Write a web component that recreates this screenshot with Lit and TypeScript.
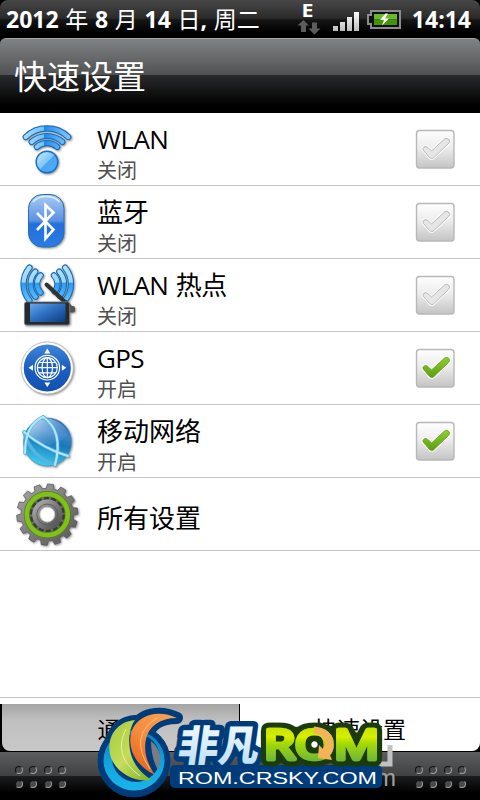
import {css, CSSResultGroup, html, LitElement, svg, SVGTemplateResult, TemplateResult} from "lit";
import {property, customElement} from "lit/decorators.js";
import {classMap} from "lit/directives/class-map.js";

interface Setting {
    icon: string;
    title: string;
    state?: string;
    checked?: boolean;
}

const SETTINGS: Setting[] = [
    {icon: "wlan", title: "WLAN", state: "关闭", checked: false},
    {icon: "bluetooth", title: "蓝牙", state: "关闭", checked: false},
    {icon: "hotspot", title: "WLAN 热点", state: "关闭", checked: false},
    {icon: "gps", title: "GPS", state: "开启", checked: true},
    {icon: "mobile", title: "移动网络", state: "开启", checked: true},
    {icon: "gear", title: "所有设置"},
];

// Arc around (cx, cy), angles in degrees
function arc(cx: number, cy: number, r: number, from: number, to: number): string {
    const rad = Math.PI / 180;
    const x1 = cx + r * Math.cos(from * rad);
    const y1 = cy + r * Math.sin(from * rad);
    const x2 = cx + r * Math.cos(to * rad);
    const y2 = cy + r * Math.sin(to * rad);
    return `M${x1.toFixed(2)} ${y1.toFixed(2)}A${r} ${r} 0 0 1 ${x2.toFixed(2)} ${y2.toFixed(2)}`;
}

function gearPath(cx: number, cy: number, outer: number, inner: number, teeth: number): string {
    const points: string[] = [];
    const step = (Math.PI * 2) / teeth;
    for (let i = 0; i < teeth; i++) {
        const a = i * step - 0.12;
        for (const [offset, r] of [[-0.33, inner], [-0.22, outer], [0.22, outer], [0.33, inner]]) {
            const t = a + offset * step;
            points.push(`${(cx + r * Math.cos(t)).toFixed(2)} ${(cy + r * Math.sin(t)).toFixed(2)}`);
        }
    }
    return `M${points.join("L")}Z`;
}

const wave = (d: string): SVGTemplateResult => svg`
    <path d=${d} fill="none" stroke="#1467b8" stroke-width="6.2" stroke-linecap="round"/>
    <path d=${d} fill="none" stroke="url(#wave)" stroke-width="4.2" stroke-linecap="round"/>`;

const ICONS: Record<string, SVGTemplateResult> = {
    wlan: svg`
        <defs>
            <linearGradient id="wave" gradientUnits="userSpaceOnUse" x1="6" y1="0" x2="58" y2="0">
                <stop offset="0" stop-color="#b5e2ff"/><stop offset=".44" stop-color="#6dc0fa"/>
                <stop offset=".45" stop-color="#1c8bec"/><stop offset="1" stop-color="#8fd2fb"/>
            </linearGradient>
            <linearGradient id="dot" x1="0" y1="0" x2="1" y2="1">
                <stop offset="0" stop-color="#d9f1ff"/><stop offset=".5" stop-color="#7cc3fb"/>
                <stop offset=".52" stop-color="#4aa4f6"/><stop offset="1" stop-color="#49b2fb"/>
            </linearGradient>
        </defs>
        ${wave(arc(32, 42, 30.6, 226, 314))}
        ${wave(arc(32, 42, 23, 228, 312))}
        ${wave(arc(32, 42, 15.8, 230, 310))}
        <circle cx="32" cy="45" r="10.800" fill="url(#dot)" stroke="#1b6dc0" stroke-width="1.4"/>`,
    bluetooth: svg`
        <defs>
            <linearGradient id="bt" x1="0" y1="0" x2="0" y2="1">
                <stop offset="0" stop-color="#a8cdf4"/><stop offset=".5" stop-color="#5b90e2"/>
                <stop offset=".56" stop-color="#2170dd"/><stop offset="1" stop-color="#2b7be6"/>
            </linearGradient>
        </defs>
        <rect x="13.5" y="4.5" width="35.5" height="52.5" rx="14" fill="url(#bt)" stroke="#2a6fae"/>
        <path d="M18 12Q22 6.5 31 6.5T44.500 12" fill="none" stroke="#dff0ff" stroke-width="1.4"/>
        <path d="M22 23L38.500 39.500L30.500 48.500V15L38.500 22.500L22 40" fill="none" stroke="#fff" stroke-width="2.600"/>`,
    hotspot: svg`
        <defs>
            <linearGradient id="wave" gradientUnits="userSpaceOnUse" x1="0" y1="0" x2="0" y2="40">
                <stop offset="0" stop-color="#b5e4ff"/><stop offset=".48" stop-color="#9bd7fb"/>
                <stop offset=".5" stop-color="#2c9bf0"/><stop offset="1" stop-color="#62c8ff"/>
            </linearGradient>
            <linearGradient id="screen" x1="0" y1="0" x2="1" y2="1">
                <stop offset="0" stop-color="#68a8ec"/><stop offset=".45" stop-color="#2f72c4"/>
                <stop offset="1" stop-color="#0c3b7c"/>
            </linearGradient>
        </defs>
        ${wave(arc(34, 21, 25.5, 140, 220))}
        ${wave(arc(34, 21, 18.5, 136, 222))}
        ${wave(arc(34, 21, 12, 134, 226))}
        ${wave(arc(30.5, 21, 25.5, -40, 40))}
        ${wave(arc(30.5, 21, 18.5, -42, 40))}
        ${wave(arc(30.5, 21, 12, -46, 40))}
        <path d="M31.500 21.500L50 39" stroke="#333" stroke-width="4" stroke-linecap="round"/>
        <path d="M50 38L55 44" stroke="#444" stroke-width="4"/>
        <rect x="52" y="43" width="8" height="6.500" rx="2" fill="#555"/>
        <rect x="9.500" y="39" width="45" height="23" rx="2" fill="#262a2e" stroke="#74787c" stroke-width=".8"/>
        <rect x="15" y="40.500" width="35.500" height="18.500" fill="url(#screen)"/>`,
    gps: svg`
        <defs>
            <linearGradient id="gps" x1="0" y1="0" x2="0" y2="1">
                <stop offset="0" stop-color="#3f86d8"/><stop offset=".5" stop-color="#1c5fc0"/>
                <stop offset="1" stop-color="#1050b0"/>
            </linearGradient>
        </defs>
        <circle cx="32.300" cy="32" r="26" fill="#fff" stroke="#b8b8b8" stroke-width=".8"/>
        <circle cx="32.300" cy="32" r="23.600" fill="url(#gps)"/>
        <g fill="none" stroke="#fff" stroke-width="1.200">
            <circle cx="32.300" cy="31.700" r="12.300"/>
            <circle cx="32.300" cy="31.700" r="10"/>
            <ellipse cx="32.300" cy="31.700" rx="5.200" ry="10"/>
            <path d="M32.300 21.700V41.700M22.300 31.700H42.300M23.800 26.500H40.800M23.800 36.900H40.800"/>
        </g>
        <path d="M29.300 17.500L32.300 12.500L35.300 17.500ZM29.300 46.500L32.300 51L35.300 46.500ZM18 28.700L13.500 31.700L18 34.700ZM46.800 28.700L51.300 31.700L46.800 34.700Z" fill="#fff"/>`,
    mobile: svg`
        <defs>
            <linearGradient id="globe" x1=".7" y1="0" x2=".4" y2="1">
                <stop offset="0" stop-color="#2a66ac"/><stop offset=".3" stop-color="#3a84c8"/>
                <stop offset=".5" stop-color="#1a78b8"/><stop offset="1" stop-color="#3fd0ee"/>
            </linearGradient>
            <linearGradient id="shine" x1="0" y1="0" x2="1" y2=".8">
                <stop offset="0" stop-color="#e4f4ff" stop-opacity=".95"/><stop offset="1" stop-color="#5a9cd8" stop-opacity=".1"/>
            </linearGradient>
        </defs>
        <circle cx="32.500" cy="33" r="24" fill="url(#globe)" stroke="#3d8cc4" stroke-width=".6"/>
        <path d="M11 24Q20 8 36 10Q46 12 54 24Q46 34 34 36Q20 32 11 24Z" fill="url(#shine)"/>
        <g fill="none" stroke="#55b4e4" stroke-width="3.400" stroke-linecap="round">
            <path d="M9 23Q29 40 53 47"/>
            <path d="M28 8Q49 22 40 56"/>
            <path d="M28 8Q10 16 10 44"/>
            <path d="M9 23Q16 48 40 56"/>
        </g>
        <g fill="none" stroke="#b4e7fb" stroke-width="2" stroke-linecap="round">
            <path d="M9 23Q29 40 53 47"/>
            <path d="M28 8Q49 22 40 56"/>
            <path d="M28 8Q10 16 10 44"/>
        </g>`,
    gear: svg`
        <defs>
            <linearGradient id="metal" x1="0" y1="0" x2="1" y2="1">
                <stop offset="0" stop-color="#a8a8a8"/><stop offset=".5" stop-color="#7c7c7c"/>
                <stop offset="1" stop-color="#555"/>
            </linearGradient>
        </defs>
        <path d=${gearPath(32.3, 32.6, 30.7, 26.3, 14)} fill="url(#metal)" stroke="#555" stroke-width=".7" stroke-linejoin="round"/>
        <circle cx="32.300" cy="32.600" r="20.500" fill="#6b6b6b" stroke="#4f8010" stroke-width="6"/>
        <circle cx="32.300" cy="32.600" r="20.500" fill="none" stroke="#7fc01a" stroke-width="4.600"/>
        <circle cx="32.300" cy="32.600" r="16.300" fill="none" stroke="#3a3a3a" stroke-width="2.400" stroke-dasharray="5 2.300"/>
        <circle cx="32.300" cy="32.600" r="11" fill="none" stroke="url(#metal)" stroke-width="8"/>
        <circle cx="32.300" cy="32.600" r="10.500" fill="none" stroke="#555" stroke-width=".8"/>
        <circle cx="32.300" cy="32.600" r="7.400" fill="#fff" stroke="#ccc"/>`,
};

@customElement("setting-icon")
export class SettingIcon extends LitElement {
    @property() public name: string = "";

    protected render(): TemplateResult {
        return html`<svg viewBox="0 0 64 64" width="64" height="64">${ICONS[this.name]}</svg>`;
    }

    static get styles(): CSSResultGroup {
        return css`
            :host {
                display: block;
                width: 64px;
                height: 64px;
                flex: none;
            }

            svg {
                display: block;
                filter: drop-shadow(1px 1px 1px rgba(0, 0, 0, 0.45));
            }
        `;
    }
}

@customElement("check-box")
export class CheckBox extends LitElement {
    @property({type: Boolean}) public checked: boolean = false;

    protected render(): TemplateResult {
        const tick = "M8.500 21.500Q7 19.500 9 18Q11 17 13 18.500L16.500 22L29.500 10Q32 8.500 34 10.500Q35.500 12.500 33.500 14.500L18.500 29Q16.500 30.500 14.500 28.500Z";
        const edge = this.checked ? "#6f9f2c" : "#b0b0b0";
        const fill = this.checked ? "url(#on)" : "#e6e6e6";
        return html`
            <svg viewBox="0 0 40 40" width="40" height="40">
                <defs>
                    <linearGradient id="box" x1="0" y1="0" x2="0" y2="1">
                        <stop offset="0" stop-color="#fefefe"/><stop offset=".45" stop-color="#ededed"/>
                        <stop offset="1" stop-color="#c4c4c4"/>
                    </linearGradient>
                    <linearGradient id="on" x1="0" y1="0" x2="0" y2="1">
                        <stop offset="0" stop-color="#8ed02c"/><stop offset="1" stop-color="#5c9c10"/>
                    </linearGradient>
                </defs>
                <rect x="1.500" y="1.500" width="37.500" height="37.500" rx="3" fill="url(#box)" stroke="#b8b8b8" stroke-width="1.400"/>
                <path d=${tick} fill="none" stroke="#fff" stroke-width="2.600"/>
                <path d=${tick} fill=${fill} stroke=${edge} stroke-width=".9"/>
            </svg>
        `;
    }

    static get styles(): CSSResultGroup {
        return css`
            :host {
                display: block;
                flex: none;
            }

            svg {
                display: block;
            }
        `;
    }
}

@customElement("site-logo")
export class SiteLogo extends LitElement {
    protected render(): TemplateResult {
        const green = "M45 20C24 22 17 40 20 54C24 72 44 83 62 80C50 73 42 62 40 50C38 38 40 27 45 20Z";
        const orange = "M87 18C70 10 50 13 42 30C36 48 46 66 65 75C58 65 53 52 56 39C59 26 70 18 87 18Z";
        return html`
            <svg viewBox="0 0 310 100" width="310" height="100">
                <defs>
                    <linearGradient id="ring" x1="0" y1="0" x2="0" y2="1">
                        <stop offset="0" stop-color="#0a7fc0"/><stop offset=".6" stop-color="#13a6e0"/>
                        <stop offset="1" stop-color="#18b4ea"/>
                    </linearGradient>
                    <linearGradient id="leaf" x1="0" y1="0" x2="1" y2="1">
                        <stop offset="0" stop-color="#a5c93c"/><stop offset=".5" stop-color="#c4dd5a"/>
                        <stop offset="1" stop-color="#7fae2a"/>
                    </linearGradient>
                    <linearGradient id="flame" x1=".8" y1="0" x2=".3" y2="1">
                        <stop offset="0" stop-color="#f7a14e"/><stop offset=".5" stop-color="#f58a3c"/>
                        <stop offset="1" stop-color="#e8651a"/>
                    </linearGradient>
                    <linearGradient id="ice" x1="0" y1="0" x2="0" y2="1">
                        <stop offset="0" stop-color="#fff"/><stop offset="1" stop-color="#b5dcf5"/>
                    </linearGradient>
                    <linearGradient id="lime" gradientUnits="userSpaceOnUse" x1="0" y1="26" x2="0" y2="62">
                        <stop offset="0" stop-color="#c4e000"/><stop offset=".3" stop-color="#d8ee00"/>
                        <stop offset=".5" stop-color="#a4d808"/><stop offset="1" stop-color="#6ab43a"/>
                    </linearGradient>
                    <filter id="outline" filterUnits="userSpaceOnUse" x="160" y="10" width="150" height="66">
                        <feMorphology in="SourceAlpha" operator="dilate" radius="2"/>
                        <feGaussianBlur stdDeviation="2.500"/>
                        <feComponentTransfer result="grown">
                            <feFuncA type="linear" slope="12" intercept="-.8"/>
                        </feComponentTransfer>
                        <feFlood flood-color="#1d3a08"/>
                        <feComposite in2="grown" operator="in" result="rim"/>
                        <feMerge><feMergeNode in="rim"/><feMergeNode in="SourceGraphic"/></feMerge>
                    </filter>
                </defs>
                <path d="M300 45V64H288" fill="none" stroke="#c2c2c2" stroke-width="5"/>
                <text class="mark" x="286" y="86">m</text>
                <g fill="#003c7a" stroke="#003c7a" stroke-linejoin="round">
                    <circle cx="44" cy="61" r="36"/>
                    <path d=${green} stroke-width="10"/>
                    <path d=${orange} stroke-width="12"/>
                </g>
                <ellipse cx="44" cy="60.500" rx="30.500" ry="30" fill="url(#ring)"/>
                <circle cx="46" cy="58" r="24" fill="#003c7a"/>
                <path d="M61 41Q75 52 68 70Q61 58 61 41Z" fill="#777d82"/>
                <path d=${green} fill="url(#leaf)"/>
                <path d=${orange} fill="url(#flame)"/>
                <path d="M36 29Q22 56 50 76" fill="none" stroke="#e4efa6"/>
                <path d="M67 18Q38 36 60 69" fill="none" stroke="#fbc08a"/>
                <g transform="skewX(-8)">
                    <text class="han" x="95" y="61" textLength="81" lengthAdjust="spacingAndGlyphs">非凡</text>
                </g>
                <rect x="80" y="65" width="212" height="23" rx="5" fill="#003c7a"/>
                <g filter="url(#outline)">
                    <text class="rom" x="174" y="59" textLength="115" lengthAdjust="spacingAndGlyphs">ROM</text>
                </g>
                <path d="M224 26.500Q243 28 243.500 46Q243.500 52 240 55L242 60L228 58L229 45L233 49Q240 37 224 33Z" fill="#f3b458"/>
                <text class="url" x="88" y="83.500" textLength="199" lengthAdjust="spacingAndGlyphs">ROM.CRSKY.COM</text>
            </svg>
        `;
    }

    static get styles(): CSSResultGroup {
        return css`
            :host {
                display: block;
            }

            svg {
                display: block;
            }

            .han {
                font: 900 42px "Noto Sans CJK SC", sans-serif;
                fill: url(#ice);
                stroke: #003c7a;
                stroke-width: 11px;
                stroke-linejoin: round;
                paint-order: stroke;
            }

            .rom {
                font: 400 41px "Open Sans", sans-serif;
                fill: url(#lime);
                stroke: url(#lime);
                stroke-width: 4.6px;
                stroke-linejoin: round;
            }

            .url {
                font: 400 17px "Liberation Sans", sans-serif;
                fill: #fff;
            }

            .mark {
                font: 24px "Liberation Sans", sans-serif;
                fill: #a0a0a0;
            }
        `;
    }
}

@customElement("app-root")
export class AppRoot extends LitElement {
    protected renderStatusIcons(): TemplateResult {
        return html`
            <svg class="network" viewBox="0 0 24 38" width="24" height="38">
                <text class="edge" x="4.500" y="16.500" textLength="12" lengthAdjust="spacingAndGlyphs">E</text>
                <path d="M6.500 20L12 25.500H9V32H4V25.500H0.500ZM15 22.500H20V28.500H23.500L17.500 34.500L11.500 28.500H15Z" fill="#5c5c5c"/>
            </svg>
            <svg class="signal" viewBox="0 0 26 38" width="26" height="38">
                <defs>
                    <linearGradient id="bars" x1="0" y1="0" x2="0" y2="1">
                        <stop offset="0" stop-color="#fff"/><stop offset="1" stop-color="#bbb"/>
                    </linearGradient>
                </defs>
                <path d="M0 26H5V31H0ZM7 22H12V31H7ZM14 17H19V31H14ZM21 12H26V31H21Z" fill="url(#bars)"/>
            </svg>
            <svg class="battery" viewBox="0 0 34 38" width="34" height="38">
                <path d="M4 11H33V28H4V24H1V15H4Z" fill="#111" stroke="#8c8c8c" stroke-width="2"/>
                <rect x="7" y="14" width="23" height="5.500" fill="#6cb82a"/>
                <rect x="7" y="19.500" width="23" height="5.500" fill="#469208"/>
                <path d="M18.500 13.500L13 20H17L15 25.500L22 18.500H18L21 13.500Z" fill="#fff"/>
            </svg>
        `;
    }

    protected renderSetting(item: Setting): TemplateResult {
        const latin = /^[A-Z]/.test(item.title);
        return html`
            <div class="row">
                <setting-icon .name=${item.icon}></setting-icon>
                <div class="labels">
                    <div class=${classMap({name: true, latin})}>${item.title}</div>
                    ${item.state ? html`<div class="state">${item.state}</div>` : ""}
                </div>
                ${item.checked === undefined ? "" : html`<check-box .checked=${item.checked}></check-box>`}
            </div>
        `;
    }

    protected renderDots(): TemplateResult {
        return html`<div class="dots">${Array.from({length: 8}, () => html`<i></i>`)}</div>`;
    }

    protected render(): TemplateResult {
        return html`
            <div class="status">
                <div class="date"><b>2012</b> 年 <b>8</b> 月 <b>14</b> 日<b>,</b> 周二</div>
                ${this.renderStatusIcons()}
                <div class="clock">14:14</div>
            </div>
            <div class="header">快速设置</div>
            <div class="list">${SETTINGS.map((item) => this.renderSetting(item))}</div>
            <div class="tabs">
                <div class="tab">通知</div>
                <div class="tab active">快速设置</div>
            </div>
            <div class="handle">
                ${this.renderDots()}
                ${this.renderDots()}
            </div>
            <site-logo class="logo"></site-logo>
        `;
    }

    static get styles(): CSSResultGroup {
        return css`
            :host {
                display: flex;
                flex-direction: column;
                position: relative;
                width: 480px;
                height: 800px;
                overflow: hidden;
                background: #000;
                color: #000;
                font-family: "Open Sans", "Noto Sans CJK SC", sans-serif;
            }

            .status {
                display: flex;
                flex: none;
                height: 38px;
                box-sizing: border-box;
                padding: 0 9px 0 6px;
                border-radius: 8px 8px 0 0;
                background: linear-gradient(#484848, #2a2a2a 48%, #161616 52%, #000 85%);
                color: #fff;
                font-size: 23px;
                line-height: 38px;
                white-space: nowrap;
            }

            .date {
                width: 291px;
                word-spacing: 0.7px;
            }

            .edge {
                font: bold 17px "Open Sans", sans-serif;
                fill: #fff;
            }

            .signal {
                margin-left: 12px;
            }

            .battery {
                margin-left: 8px;
            }

            .clock {
                flex: 1;
                text-align: right;
                font-weight: bold;
            }

            .header {
                flex: none;
                height: 75px;
                box-sizing: border-box;
                padding-left: 14px;
                border-top: 1px solid #a5a5a5;
                border-radius: 6px 6px 0 0;
                background: linear-gradient(#808284, #505254 48%, #2a2b2d 48%, #000 90%);
                color: #fff;
                font-size: 33px;
                line-height: 76px;
            }

            .list {
                flex: none;
                height: 585px;
                box-sizing: border-box;
                background: #fff;
                border-bottom: 1px solid #c6c6c6;
            }

            .row {
                display: flex;
                align-items: center;
                height: 73px;
                box-sizing: border-box;
                padding: 0 25px 0 15px;
                border-bottom: 1px solid #c6c6c6;
            }

            .labels {
                flex: 1;
                padding: 8px 0 0 18px;
            }

            .name {
                font-size: 26px;
                line-height: 34px;
            }

            .name.latin {
                letter-spacing: -0.6px;
                word-spacing: 1.5px;
            }

            .state {
                color: #505050;
                font-size: 20px;
                line-height: 29px;
            }

            .tabs {
                display: flex;
                flex: none;
                height: 47px;
                margin-bottom: 1px;
                padding-left: 2px;
                gap: 1px;
                border-top: 6px solid #fff;
                font-size: 23px;
                line-height: 50px;
                text-align: center;
            }

            .tab {
                width: 237px;
                border-radius: 0 0 0 8px;
                background: linear-gradient(#a4a4a4, #c0c0c0 35%, #c8c8c8);
            }

            .tab.active {
                width: 240px;
                border-radius: 0 0 8px 0;
                background: #fff;
            }

            .handle {
                display: flex;
                flex: 1;
                justify-content: space-between;
                padding: 14px 14px 0 15px;
                background: linear-gradient(#5c5e60, #3e4042 50%, #1c1d1e 50%, #000 85%);
            }

            .dots {
                display: grid;
                grid-template-columns: repeat(4, 8px);
                grid-auto-rows: 8px;
                gap: 6px 6.4px;
                align-content: start;
            }

            .dots i {
                box-sizing: border-box;
                border: 1px solid;
                border-color: #111 #a0a0a0 #a0a0a0 #111;
                border-radius: 50%;
                background: #4a4a4a;
            }

            .logo {
                position: absolute;
                left: 90px;
                top: 700px;
            }
        `;
    }
}
